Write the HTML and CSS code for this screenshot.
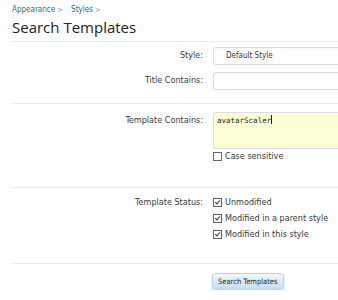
FILE: index.html
```html
<!DOCTYPE html>
<html>
<head>
    <title>Search Templates</title>
    <meta name="viewport" content="width=device-width, initial-scale=1">
    <link rel="stylesheet" href="styles.css">
</head>
<body>
    <div class="breadcrumb">
        <a href="#">Appearance</a> <span class="arrow">&gt;</span>
        <a href="#">Styles</a> <span class="arrow">&gt;</span>
    </div>
    <h1 class="title">Search Templates</h1>

    <form class="xenForm">
        <!-- style + title -->
        <div class="section">
            <div class="row">
                <label class="label">Style:</label>
                <div class="ctrl"><div class="select">Default Style</div></div>
            </div>
            <div class="row">
                <label class="label">Title Contains:</label>
                <div class="ctrl"><div class="textbox"></div></div>
            </div>
        </div>

        <!-- template contents -->
        <div class="section">
            <div class="row">
                <label class="label">Template Contains:</label>
                <div class="ctrl">
                    <div class="textarea">avatarScaler<span class="caret"></span></div>
                    <div class="check"><span class="box"></span>Case sensitive</div>
                </div>
            </div>
        </div>

        <!-- status -->
        <div class="section">
            <div class="row">
                <label class="label">Template Status:</label>
                <div class="ctrl checks">
                    <div class="check"><span class="box on"></span>Unmodified</div>
                    <div class="check"><span class="box on"></span>Modified in a parent style</div>
                    <div class="check"><span class="box on"></span>Modified in this style</div>
                </div>
            </div>
        </div>

        <div class="section submit">
            <button type="button" class="button">Search Templates</button>
        </div>
    </form>
</body>
</html>
```

FILE: styles.css
```css
html {
    overflow: hidden;
}

body {
    margin: 0;
    padding: 0 0 0 12px;
    width: 340px;
    background-color: #fff;
    font-family: "DejaVu Sans", sans-serif;
    font-stretch: condensed;
    font-size: 9px;
    color: #3a3a3a;
}

.breadcrumb {
    padding-top: 5px;
    height: 10px;
    font-size: 8px;
    line-height: 10px;
}

.breadcrumb a {
    color: #2b6a86;
    text-decoration: none;
}

.breadcrumb .arrow {
    color: #7a8c99;
    font-size: 7px;
    margin-right: 6px;
}

.title {
    margin: 0;
    height: 26px;
    font-family: "Open Sans", sans-serif;
    font-stretch: normal;
    font-weight: normal;
    font-size: 15px;
    line-height: 24px;
    color: #222;
    border-bottom: 1px solid #e8edf1;
}

.section {
    border-bottom: 1px solid #e6ecf0;
}

.section:first-child {
    padding: 5px 0 13px;
}

.section:nth-child(2) {
    padding: 8px 0 24px;
}

.section:nth-child(3) {
    padding: 6px 0 21px;
}

.row {
    display: grid;
    grid-template-columns: 191px 1fr;
    column-gap: 10px;
    margin-bottom: 7px;
}

.row:last-child {
    margin-bottom: 0;
}

.label {
    text-align: right;
    line-height: 17px;
}

.section:nth-child(3) .label {
    line-height: 16px;
}

.select,
.textbox {
    height: 16px;
    border: 1px solid #d8dde2;
    border-radius: 3px 0 0 3px;
    border-right: none;
    box-shadow: inset 0 1px 2px rgba(0, 0, 0, .04);
    font-size: 8px;
    line-height: 16px;
    padding-left: 12px;
}

.textarea {
    height: 34px;
    border: 1px solid #d8dde2;
    border-right: none;
    border-radius: 3px 0 0 3px;
    background-color: #ffffd6;
    font-family: "DejaVu Sans Mono", monospace;
    font-stretch: normal;
    font-size: 7.5px;
    line-height: 14px;
    padding: 1px 0 0 3px;
    color: #222;
}

.caret {
    display: inline-block;
    width: 1px;
    height: 9px;
    background-color: #222;
    vertical-align: -1px;
}

.check {
    display: flex;
    align-items: center;
    height: 14px;
    line-height: 14px;
}

.checks .check {
    height: 16px;
    line-height: 16px;
}

.box {
    box-sizing: border-box;
    width: 9px;
    height: 9px;
    border: 1px solid #666;
    margin-right: 3px;
    background-color: #fff;
    position: relative;
}

.box.on::after {
    content: "";
    position: absolute;
    left: 2px;
    top: 0;
    width: 2px;
    height: 4px;
    border: solid #444;
    border-width: 0 1px 1px 0;
    transform: rotate(40deg);
}

.submit {
    border-bottom: none;
    padding: 9px 0 0 200px;
}

.button {
    height: 17px;
    padding: 0 5px;
    font-family: "DejaVu Sans", sans-serif;
    font-stretch: condensed;
    font-size: 7.5px;
    color: #222;
    border: 1px solid #b8d2e6;
    border-radius: 4px;
    background: linear-gradient(#f4f9fd, #c4ddf0);
    box-shadow: 0 1px 2px rgba(80, 120, 160, .4);
}
```
